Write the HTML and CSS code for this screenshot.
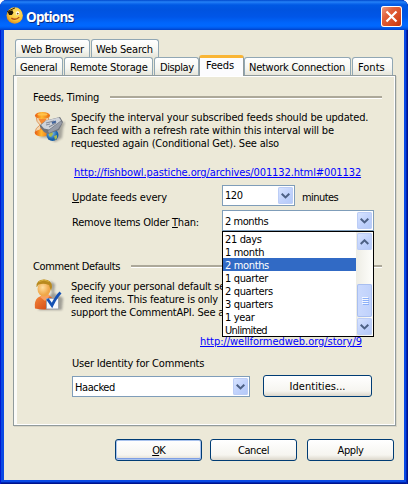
FILE: index.html
```
<!DOCTYPE html>
<html lang="en">
<head>
<meta charset="utf-8">
<title>Options</title>
<link rel="stylesheet" href="styles.css">
</head>
<body>
<div class="window">
  <header class="titlebar">
    <svg class="app-icon" width="17" height="17" viewBox="0 0 16 16">
      <defs><radialGradient id="face" cx=".6" cy=".35" r=".7"><stop offset="0" stop-color="#ffe873"/><stop offset=".65" stop-color="#f8c234"/><stop offset="1" stop-color="#d8861c"/></radialGradient></defs>
      <circle cx="8.200" cy="8" r="7.700" fill="url(#face)"/>
      <path d="M1 4.500 8.500.8" stroke="#2a1c08" stroke-width=".9"/>
      <path d="M1.500 4.500 6 3 7 5.500 5.500 7.500 3 7.500z" fill="#1c1408"/>
      <ellipse cx="11" cy="5.800" rx="1.500" ry="1.900" fill="#fff"/><circle cx="11" cy="6.200" r=".9" fill="#7a4a10"/>
      <path d="M5 10.500q4 2.500 7.500-1" fill="none" stroke="#b3501a" stroke-width="1.200"/>
    </svg>
    <span class="title">Options</span>
    <span class="close"><svg width="21" height="21" viewBox="0 0 21 21"><path d="M5.500 5.500l10 10M15.500 5.500l-10 10" stroke="#fff" stroke-width="2.200"/></svg></span>
  </header>
  <main class="client">
    <nav class="tabs">
      <span class="tab t-browser">Web Browser</span>
      <span class="tab t-search">Web Search</span>
    </nav>
    <nav class="tabs">
      <span class="tab t-general">General</span>
      <span class="tab t-storage">Remote Storage</span>
      <span class="tab t-display">Display</span>
      <span class="tab t-feeds active">Feeds</span>
      <span class="tab t-network">Network Connection</span>
      <span class="tab t-fonts">Fonts</span>
    </nav>
    <section class="panel">
      <h2 class="group timing-head">Feeds, Timing</h2>
      <div class="body">
        <svg class="pic" width="32" height="32" viewBox="0 0 32 32">
          <defs>
            <linearGradient id="sand" x2="1"><stop stop-color="#e85a10"/><stop offset=".45" stop-color="#ffb830"/><stop offset="1" stop-color="#e86810"/></linearGradient>
            <radialGradient id="globe" cx=".4" cy=".35"><stop stop-color="#8ccbf5"/><stop offset="1" stop-color="#1560aa"/></radialGradient>
            <filter id="soft"><feGaussianBlur stdDeviation="1.1"/></filter>
          </defs>
          <path d="M5 26l10 1 6 4 7-4 1-10 2-6-8 2-8 6z" fill="#555" opacity=".45" filter="url(#soft)"/>
          <path d="M2 5q0 6 4 9-5 3-5 8h14q0-5-4-8 4-3 4-9z" fill="#f3d6b0" stroke="#d98a4c" stroke-width=".8"/>
          <path d="M4.500 8h8l-3.500 6 4 8H4l4-8z" fill="#f47a1c" opacity=".85"/>
          <ellipse cx="8" cy="22" rx="7.200" ry="3.400" fill="url(#sand)"/>
          <ellipse cx="8.500" cy="4.500" rx="7.500" ry="3.500" fill="url(#sand)"/>
          <ellipse cx="8.500" cy="3.400" rx="5" ry="1.200" fill="#ffc24c"/>
          <circle cx="18.500" cy="24" r="6" fill="url(#globe)"/>
          <path d="M15 21l3-1 1 3-2 3-2-1zM20 25l3-1v3l-2 2z" fill="#a9ba4e"/>
          <path d="M6 14l6-4.500L26 6l3 5-4 8-11 4-4-2-4-5z" fill="#6f747d"/>
          <path d="M7 14l5-4.500L25 6.500l2 3-12 9-5-1z" fill="#cfd3da"/>
          <path d="M14 20l13-10 1 2-4 6-9 4z" fill="#969ca8"/>
          <path d="M12 12l8-2M12 14l4-1M15 16l7-4" stroke="#858b99" stroke-width="1.100"/>
          <path d="M18 12l4-1.500" stroke="#41639a" stroke-width="2"/>
        </svg>
        <div class="fields">
          <p class="para">
            <span class="line p1">Specify the interval your subscribed feeds should be updated.</span>
            <span class="line p2">Each feed with a refresh rate within this interval will be</span>
            <span class="line p3">requested again (Conditional Get). See also</span>
          </p>
          <a class="link fishbowl">http://fishbowl.pastiche.org/archives/001132.html#001132</a>
          <div class="row every">
            <label class="label l-every"><u>U</u>pdate feeds every</label>
            <span class="combo small"><span class="value">120</span><span class="arrow"><svg width="9" height="6" viewBox="0 0 9 6"><path d="M.7.7 4.500 4.400 8.300.7" /></svg></span></span>
            <span class="label minutes">minutes</span>
          </div>
          <div class="row older">
            <label class="label l-older">Remove Items Older <u>T</u>han:</label>
            <div class="combo wide"><span class="value">2 months</span><span class="arrow"><svg width="9" height="6" viewBox="0 0 9 6"><path d="M.7.7 4.500 4.400 8.300.7" /></svg></span>
              <div class="dropdown">
                <ul class="options">
                  <li>21 days</li><li>1 month</li><li class="selected">2 months</li><li>1 quarter</li><li>2 quarters</li><li>3 quarters</li><li>1 year</li><li class="unlimited">Unlimited</li>
                </ul>
                <div class="scroll">
                  <span class="sbtn"><svg width="9" height="6" viewBox="0 0 9 6"><path d="M.7 5 4.500 1.300 8.300 5" /></svg></span>
                  <span class="thumb"><i></i><i></i><i></i><i></i></span>
                  <span class="sbtn"><svg width="9" height="6" viewBox="0 0 9 6"><path d="M.7.7 4.500 4.400 8.300.7" /></svg></span>
                </div>
              </div>
            </div>
          </div>
        </div>
      </div>
      <h2 class="group comment-head">Comment Defaults</h2>
      <div class="body">
        <svg class="pic" width="32" height="34" viewBox="0 0 32 34">
          <defs>
            <radialGradient id="skin" cx=".4" cy=".4"><stop stop-color="#ffdfa0"/><stop offset="1" stop-color="#f0a748"/></radialGradient>
            <linearGradient id="shirt" x2="1" y2="1"><stop stop-color="#f58a3c"/><stop offset="1" stop-color="#cf3f10"/></linearGradient>
          </defs>
          <path d="M4 31h24l1-12-9-5 1-9-5-3 2 12z" fill="#555" opacity=".5" filter="url(#soft)"/>
          <path d="M1 29.500q-1-8 3-11l4-2h7q4 2 5 6v7q-10 2-19 0z" fill="url(#shirt)"/>
          <path d="M6 18l5 4 5-5-2-2H8z" fill="#f8a060"/>
          <ellipse cx="10" cy="10" rx="6.500" ry="7.500" fill="url(#skin)"/>
          <path d="M2.500 8Q2 .5 10 .5T18 8l-1 4-2-6q-5-2-8-1-3 0-4 3z" fill="#b98a1e"/>
          <path d="M5 2.500q5-3 10 0" stroke="#d8b040" fill="none"/>
          <path d="M12.500 19.500h12v10.500h-12z" fill="#f8f8fb" stroke="#a0a4ac"/>
          <path d="M13.500 20l4.500 6.500Q22 18 26.500 13.500" fill="none" stroke="#1450b4" stroke-width="2.800"/>
        </svg>
        <div class="fields">
          <p class="para">
            <span class="line p1">Specify your personal default se</span>
            <span class="line p2">feed items. This feature is only</span>
            <span class="line p3">support the CommentAPI. See a</span>
          </p>
          <a class="link wellformed">http://wellformedweb.org/story/9</a>
          <label class="label identity-label">User Identity for Comments</label>
          <div class="row identity">
            <span class="combo user"><span class="value">Haacked</span><span class="arrow"><svg width="9" height="6" viewBox="0 0 9 6"><path d="M.7.7 4.500 4.400 8.300.7" /></svg></span></span>
            <button class="btn b-ident">Identities...</button>
          </div>
        </div>
      </div>
    </section>
    <footer class="actions">
      <button class="btn default b-ok"><u>O</u>K</button>
      <button class="btn b-cancel">Cancel</button>
      <button class="btn b-apply">Apply</button>
    </footer>
  </main>
</div>
</body>
</html>
```
FILE: styles.css
```
* { box-sizing: border-box; }
body { margin: 0; background: #fff; }
.window, .btn {
  font: 11px/13px "DejaVu Sans Condensed", "DejaVu Sans", sans-serif;
  letter-spacing: -0.17px;
  color: #000;
}
.window {
  width: 408px; height: 484px; padding: 0 4px 4px; overflow: hidden;
  border-radius: 7px 7px 0 0;
  background: #0a49e4;
  box-shadow: inset 1px 0 #0019cf, inset -1px 0 #00138c, inset -2px 0 #0027b4, inset 0 -1px #00138c, inset 0 -2px #0027b4;
  white-space: nowrap; cursor: default;
}
.titlebar {
  display: flex; height: 30px; margin: 0 -4px; padding: 0 6px;
  background: linear-gradient(#0048cc 0, #2583f8 2px, #1670f0 3px, #0059e4 5px, #0053e0 10px, #0056e8 17px, #0066fc 23px, #0068ff 26px, #005aec 28px, #0040c8 30px);
}
.app-icon { margin-top: 7px; }
.title {
  margin: 7px 0 0 3px;
  font: bold 13.5px/20px "Open Sans", sans-serif; letter-spacing: -0.85px;
  color: #fff; text-shadow: 1px 1px #0a2a80;
}
.close {
  width: 21px; height: 21px; margin: 6px 0 0 auto; overflow: hidden;
  border-radius: 3px; box-shadow: inset 0 0 0 1px #fff;
  background: linear-gradient(135deg, #f0a48c, #e2613c 35%, #d4451a 75%, #b8300c);
}
.close svg { display: block; }
.client { height: 450px; padding: 9px 8px 0 9px; background: #ece9d8; }

.tabs { display: flex; align-items: flex-end; height: 18px; padding-left: 2px; }
.tab {
  height: 18px; margin-right: 1px; padding: 3px 0 0 5px;
  border: 1px solid #91a7b4; border-bottom: 0; border-radius: 3px 3px 0 0;
  background: linear-gradient(#fff, #f6f6f1 60%, #e6e5da);
}
.t-browser { width: 75px; }
.t-search { width: 68px; padding-left: 4px; }
.t-general { width: 48px; letter-spacing: -0.25px; padding-left: 4px; }
.t-storage { width: 89px; }
.t-display { width: 45px; margin-right: 0; letter-spacing: -0.4px; }
.t-network { width: 107px; padding-left: 4px; letter-spacing: -0.25px; }
.t-fonts { width: 41px; letter-spacing: 0; }
.tab.active {
  position: relative; z-index: 1; width: 45px; height: 21px; margin: 0 0 -1px; padding: 1px 0 0 6px;
  border-color: #919b9c; border-top: 3px solid #f9b535; background: #fcfcfe;
}
.panel {
  width: 383px; height: 351px; padding: 15px 13px 0 19px;
  border: 1px solid #919b9c;
  box-shadow: inset 3px 0 #fbfbf8, inset -1px -1px #fff, inset 0 1px #fff, 1px 1px #d8d5c6;
}
.group {
  display: flex; align-items: center; margin: 0; height: 13px;
  font-size: 11px; font-weight: normal;
}
.group::after { content: ""; flex: 1; height: 2px; background: #aca899; border-bottom: 1px solid #fff; margin-left: 11px; }
.comment-head { margin-top: 29px; letter-spacing: -0.37px; }
.body { display: grid; grid-template-columns: 38px 1fr; margin-top: 7px; }
.pic { margin: 0 0 0 1px; }
.comment-head + .body .pic { margin-top: -1px; }
.fields { min-width: 0; }
.para { margin: 0; }
.line { display: block; width: 311px; }
.p2, .p3 { letter-spacing: -0.19px; }
.link { display: block; width: max-content; height: 13px; margin: 16px 0 0 3px; color: #00f; text-decoration: underline; text-decoration-thickness: 1px; text-underline-offset: 1px; }
.fishbowl { letter-spacing: -0.11px; }
.wellformed { margin-left: 129px; letter-spacing: -0.04px; }
u { text-decoration: underline; text-decoration-thickness: 1px; text-underline-offset: 1px; }
.row { display: flex; align-items: flex-start; }
.every { margin-top: 6px; }
.older { margin-top: 4px; }
.label { padding-top: 6px; }
.l-every, .l-older { width: 151px; flex: none; padding-left: 1px; }
.l-every { letter-spacing: -0.12px; }
.l-older { letter-spacing: -0.22px; }
.minutes { margin-left: 7px; letter-spacing: -0.55px; }
.combo {
  position: relative; display: flex; flex: none; height: 21px;
  justify-content: space-between; border: 1px solid #7f9db9; background: #fff;
}
.small { width: 73px; }
.wide { width: 152px; }
.user { width: 178px; margin-top: 1px; }
.value { padding: 3px 0 0 2px; letter-spacing: -0.45px; }
.wide .value, .user .value { padding-top: 4px; }
.user .value { letter-spacing: -0.4px; }
.arrow, .sbtn {
  display: flex; align-items: center; justify-content: center; flex: none;
  width: 15px; height: 17px; margin: 1px; border-radius: 2px;
  background: linear-gradient(135deg, #dbe6ff, #c2d3fc 50%, #b2c8f8);
  box-shadow: inset 0 0 0 1px #bccdf6;
}
.arrow path, .sbtn path { fill: none; stroke: #4d6185; stroke-width: 2; }
.dropdown {
  position: absolute; z-index: 2; left: -1px; top: 20px; display: flex;
  width: 152px; height: 106px; border: 1px solid #000; background: #fff;
}
.options { flex: 1; margin: 0; padding: 0; list-style: none; }
.options li { height: 13px; padding: 1px 0 0 2px; letter-spacing: -0.35px; }
.options .selected { background: #316ac5; color: #fff; }
.options .unlimited { letter-spacing: -0.63px; }
.scroll { width: 17px; display: flex; flex-direction: column; background: linear-gradient(90deg, #eeede5, #fefefb); }
.thumb {
  display: flex; flex-direction: column; justify-content: center; align-items: center; gap: 1px;
  height: 33px; margin: auto 1px 0; border-radius: 2px;
  background: linear-gradient(90deg, #cbdafe, #bfd1fb); box-shadow: inset 0 0 0 1px #a9bff0;
}
.thumb i { width: 6px; height: 1px; background: #f4f8ff; box-shadow: 1px 1px #8cb0f8; }
.identity-label { display: block; margin-top: 9px; padding: 0 0 0 1px; letter-spacing: -0.19px; }
.identity { margin-top: 5px; padding-left: 1px; }
.btn {
  height: 22px; padding: 4px 0; text-align: center;
  border: 1px solid #003c74; border-radius: 3px;
  background: linear-gradient(#fff, #f6f5f0 75%, #dcd7cb);
}
.b-ident { width: 109px; margin-left: 13px; letter-spacing: 0.04px; }
.actions { display: flex; margin: 13px 0 0 102px; }
.actions .btn { width: 87px; }
.default { box-shadow: inset 0 0 0 1px #a9c3ee, inset 0 -2px #7f9fe4; letter-spacing: -0.8px; }
.b-cancel { margin-left: 8px; letter-spacing: -0.42px; }
.b-apply { margin-left: 10px; letter-spacing: -0.39px; }
```
